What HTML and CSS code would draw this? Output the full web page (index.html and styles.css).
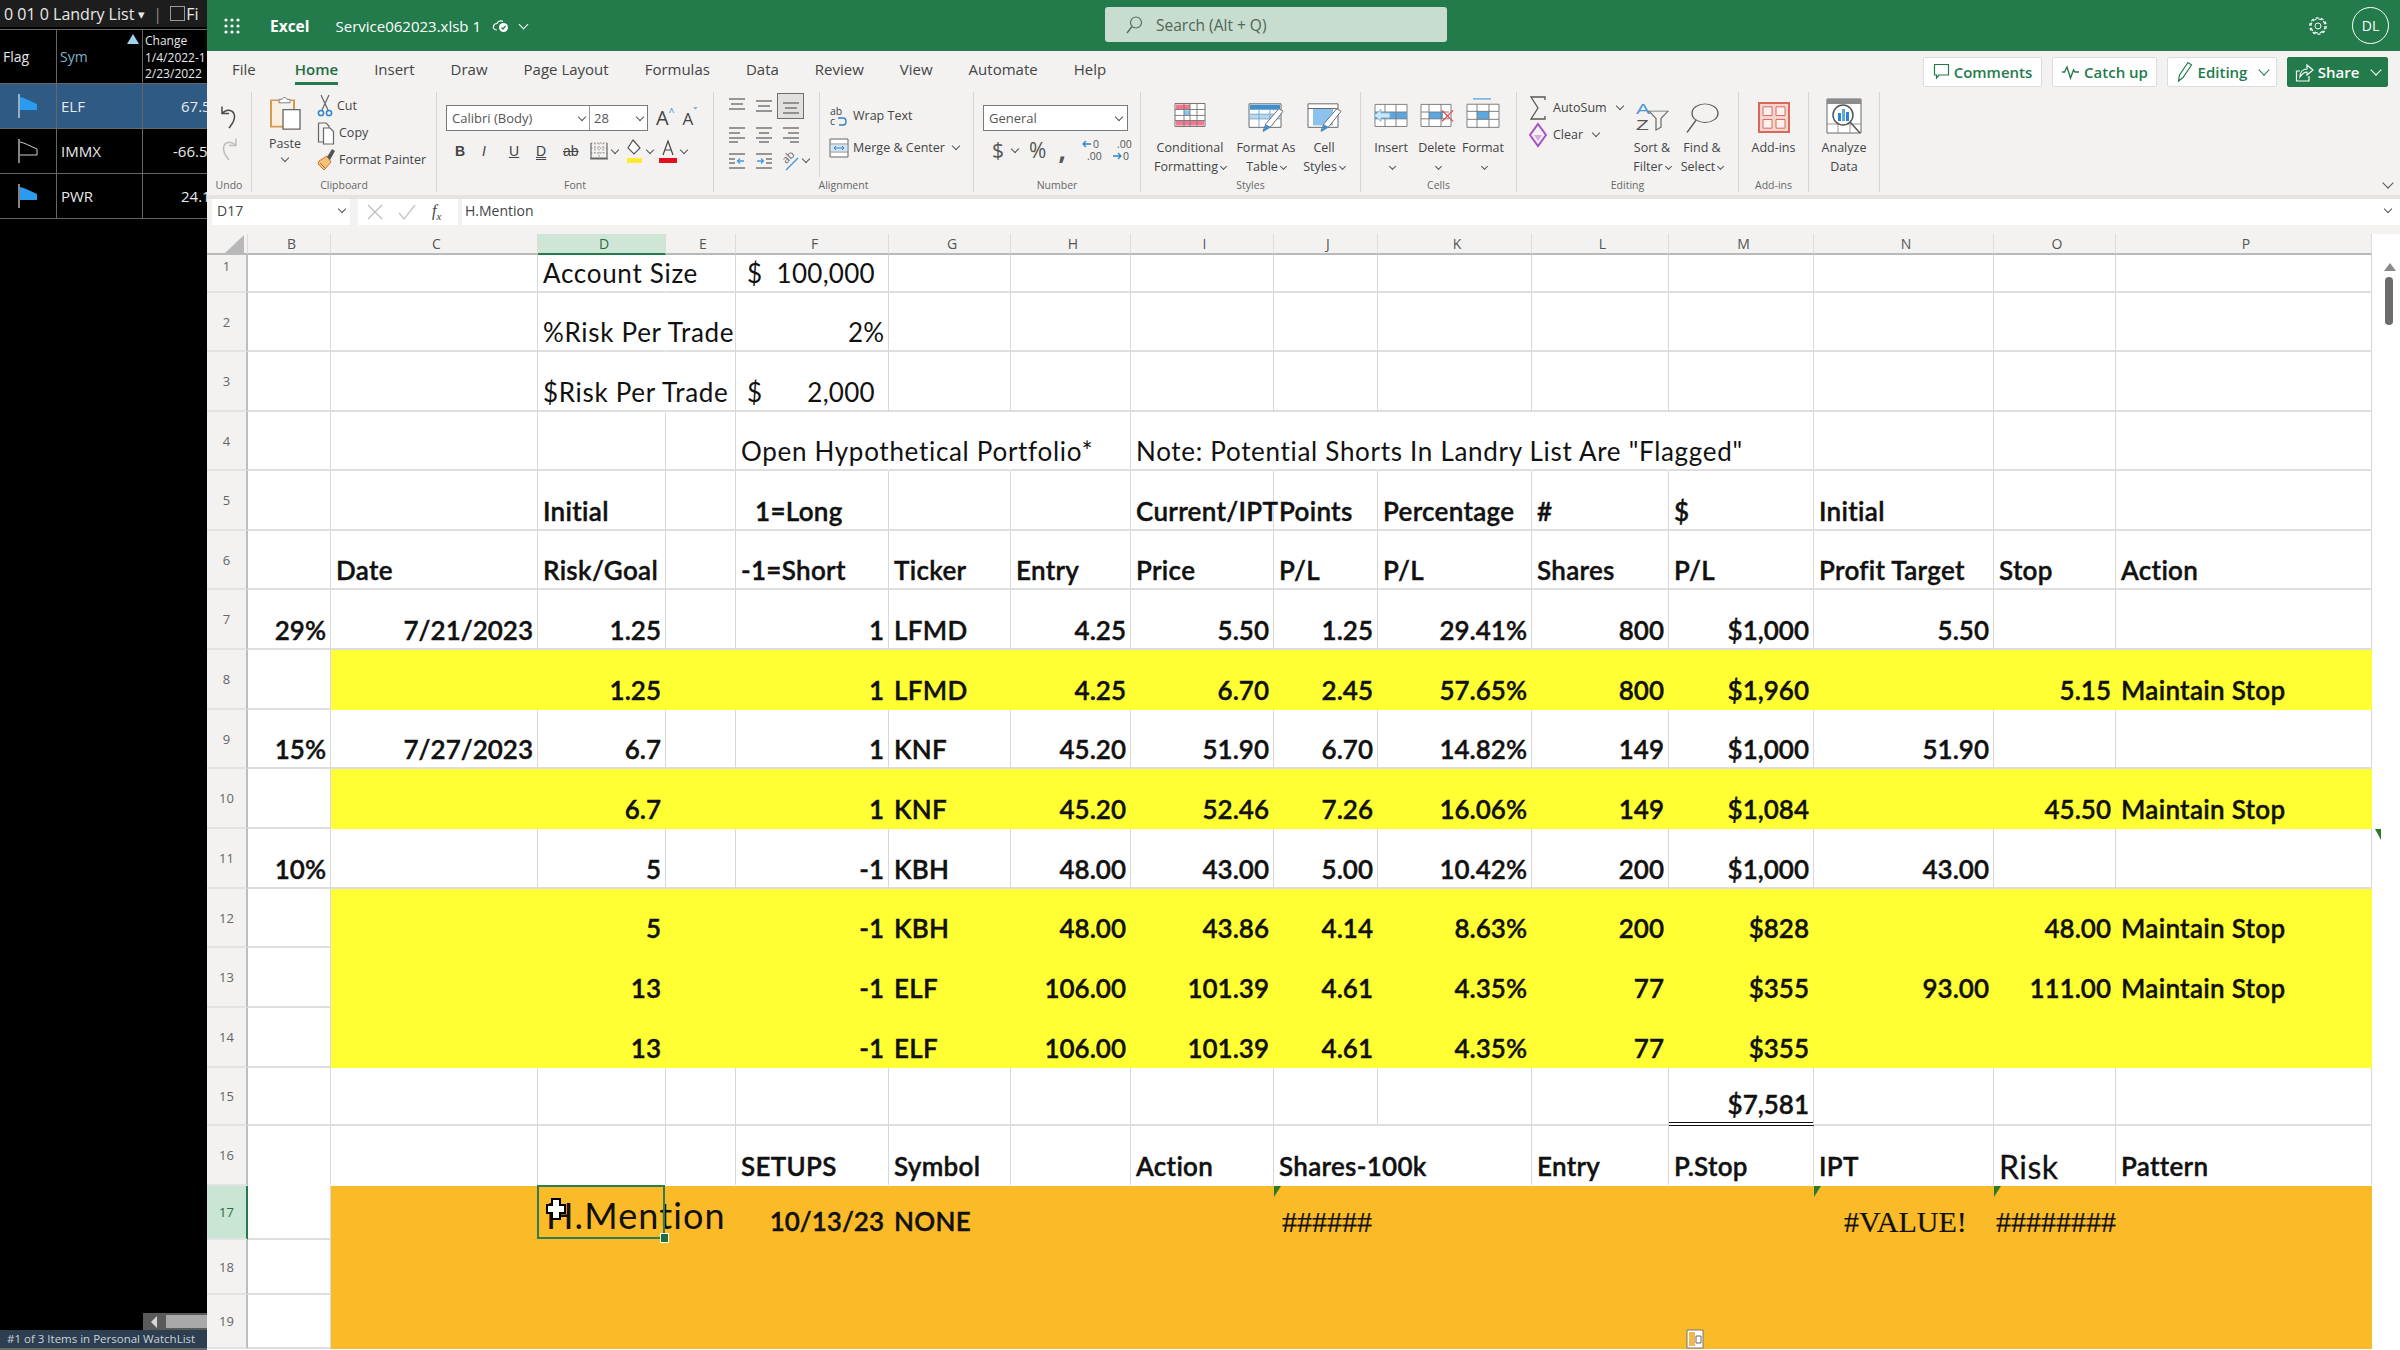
FILE: index.html
```html
<!DOCTYPE html>
<html lang="en">

<head>
    <meta charset="utf-8">
    <title>Service062023.xlsb - Excel</title>
    <link rel="stylesheet" href="styles.css">
</head>

<body>
    <!-- watch list panel on the left -->
    <aside class="watch">
        <div class="watch-top">0 01 0 Landry List <span class="caret">▾</span> <span class="pipe">|</span> <span class="check"></span>Fi</div>
        <div class="watch-row watch-head">
            <div class="wc-flag">Flag</div>
            <div class="wc-sym">Sym<span class="sort"></span></div>
            <div class="wc-chg">Change<br>1/4/2022-1<br>2/23/2022</div>
        </div>
        <div class="watch-row picked">
            <div class="wc-flag"><svg width="26" height="26" viewBox="0 0 26 26"><path d="M7 1V25" stroke="#dfe8ef" stroke-width="1.2"/><path d="M8 4C13 5 18 8 25 11V17H8Z" fill="#2b9bf0"/></svg></div>
            <div class="wc-sym">ELF</div>
            <div class="wc-num">67.5</div>
        </div>
        <div class="watch-row">
            <div class="wc-flag"><svg width="26" height="26" viewBox="0 0 26 26"><path d="M7 1V25" stroke="#dcdcdc" stroke-width="1.2"/><path d="M8 4C13 5 18 8 25 11V17H8" fill="none" stroke="#cfcfcf"/></svg></div>
            <div class="wc-sym">IMMX</div>
            <div class="wc-num">-66.5</div>
        </div>
        <div class="watch-row">
            <div class="wc-flag"><svg width="26" height="26" viewBox="0 0 26 26"><path d="M7 1V25" stroke="#dcdcdc" stroke-width="1.2"/><path d="M8 4C13 5 18 8 25 11V17H8Z" fill="#2b9bf0"/></svg></div>
            <div class="wc-sym">PWR</div>
            <div class="wc-num">24.1</div>
        </div>
        <div class="watch-scroll"><span class="scroll-left"></span><span class="scroll-thumb"></span></div>
        <div class="watch-status">#1 of 3 Items in Personal WatchList</div>
    </aside>

    <main class="excel">
        <header class="titlebar">
            <div class="title-left">
                <svg class="waffle" width="18" height="18" viewBox="0 0 18 18" fill="#fff"><circle cx="3" cy="3" r="1.6"/><circle cx="9" cy="3" r="1.6"/><circle cx="15" cy="3" r="1.6"/><circle cx="3" cy="9" r="1.6"/><circle cx="9" cy="9" r="1.6"/><circle cx="15" cy="9" r="1.6"/><circle cx="3" cy="15" r="1.6"/><circle cx="9" cy="15" r="1.6"/><circle cx="15" cy="15" r="1.6"/></svg>
                <span class="app">Excel</span>
                <span class="doc">Service062023.xlsb 1</span>
                <svg width="18" height="16" viewBox="0 0 18 16"><path d="M5 12C2 12 1 10 1.500 8C2 6 4 5.500 5 5.500C6 3 9 2 11 3.500" fill="none" stroke="#fff" stroke-width="1.200"/><circle cx="11.500" cy="9.500" r="4.500" fill="#fff"/><path d="M9.500 9.500L11 11L13.500 8" fill="none" stroke="#237b4b" stroke-width="1.200"/></svg>
                <span class="chev white"></span>
            </div>
            <div class="search">
                <svg width="18" height="20" viewBox="0 0 18 20"><circle cx="11" cy="7.500" r="5.500" fill="none" stroke="#54705f" stroke-width="1.200"/><path d="M7 11.500L2 18" stroke="#54705f" stroke-width="1.400"/></svg>
                <span>Search (Alt + Q)</span>
            </div>
            <div class="title-right">
                <svg width="20" height="20" viewBox="0 0 20 20"><circle cx="10" cy="10" r="3" fill="none" stroke="#fff"/><circle cx="10" cy="10" r="7" fill="none" stroke="#fff" stroke-width="1.100" stroke-dasharray="3.500 2"/><circle cx="10" cy="10" r="8.200" fill="none" stroke="#fff" stroke-width="1.300" stroke-dasharray="3 2.150"/></svg>
                <span class="avatar">DL</span>
            </div>
        </header>

        <nav class="tabs">
            <span class="tab file">File</span>
            <span class="tab active">Home</span>
            <span class="tab">Insert</span>
            <span class="tab">Draw</span>
            <span class="tab">Page Layout</span>
            <span class="tab">Formulas</span>
            <span class="tab">Data</span>
            <span class="tab">Review</span>
            <span class="tab">View</span>
            <span class="tab">Automate</span>
            <span class="tab">Help</span>
            <div class="actions">
                <button class="act w-comments"><svg width="17" height="20" viewBox="0 0 17 20"><path d="M1.500 2.500H15.500V13H6L3.500 16V13H1.500Z" fill="none" stroke="#237b4b" stroke-width="1.200"/></svg>Comments</button>
                <button class="act w-catch"><svg width="19" height="20" viewBox="0 0 19 20"><path d="M1 10H3.500L6 5L9.500 16L12.500 8L14 10H18" fill="none" stroke="#237b4b" stroke-width="1.400"/></svg>Catch up</button>
                <button class="act w-edit"><svg width="18" height="24" viewBox="0 0 18 24"><path d="M2.500 21L3.500 15L12 2.500L15.500 5L7 17.500Z" fill="none" stroke="#237b4b" stroke-width="1.200"/></svg>Editing<span class="chev green"></span></button>
                <button class="act share"><svg width="19" height="24" viewBox="0 0 19 24"><path d="M5 11H1.500V21H14V16" fill="none" stroke="#fff" stroke-width="1.200"/><path d="M5 17C5 12 8 9 12 9V5L18 10L12 15V12C9 12 7 14 5 17Z" fill="none" stroke="#fff" stroke-width="1.200"/></svg>Share<span class="chev white"></span></button>
            </div>
        </nav>

        <section class="ribbon">
            <div class="group g-undo">
                <div class="group-body undo-body">
                    <svg width="20" height="26" viewBox="0 0 20 26"><path d="M3 2.500V9.500H10M3 9.500C8 4 15 6 15.500 12C16 17 13 20 10 24" fill="none" stroke="#4a4a4a" stroke-width="1.500"/></svg>
                    <svg width="20" height="26" viewBox="0 0 20 26"><path d="M17 2.500V9.500H10M17 9.500C12 4 5 6 4.500 12C4 17 7 20 10 24" fill="none" stroke="#bdbdbd" stroke-width="1.500"/></svg>
                </div>
                <div class="group-label">Undo</div>
            </div>

            <div class="group g-clip">
                <div class="group-body clip-body">
                    <div class="paste">
                        <svg width="34" height="34" viewBox="0 0 34 40" preserveAspectRatio="none"><path d="M13 5H3V36H15" fill="#f8efe2" stroke="#d69b4d" stroke-width="2"/><path d="M11 8V4H14C14 1 19 1 19 4H22V8Z" fill="#fff" stroke="#777"/><path d="M22 5H26V16" fill="none" stroke="#d69b4d" stroke-width="2"/><path d="M15 16H32V39H15Z" fill="#fff" stroke="#666" stroke-width="1.300"/></svg>
                        <span>Paste</span>
                        <span class="chev"></span>
                    </div>
                    <div class="clip-list">
                        <div class="mini"><svg width="16" height="26" viewBox="0 0 16 26"><path d="M4 2L11 17M12 2L5 17" stroke="#666" stroke-width="1.200"/><circle cx="4" cy="20" r="2.600" fill="none" stroke="#2f83c8" stroke-width="1.500"/><circle cx="12" cy="20" r="2.600" fill="none" stroke="#2f83c8" stroke-width="1.500"/></svg>Cut</div>
                        <div class="mini"><svg width="18" height="26" viewBox="0 0 18 26"><path d="M1.500 3H9L12 6V8M1.500 3V22H6" fill="none" stroke="#666" stroke-width="1.200"/><path d="M6.500 8H13L16.500 11.500V24H6.500Z" fill="#fff" stroke="#666" stroke-width="1.200"/></svg>Copy</div>
                        <div class="mini"><svg width="18" height="26" viewBox="0 0 18 26"><path d="M2 14L10 9L14 15L7 23L1 17Z" fill="#f6c27a" stroke="#c9772b"/><path d="M10 10L15 2L18 4L13 13Z" fill="#555"/><path d="M3 16L8 21" stroke="#e0563a"/></svg>Format Painter</div>
                    </div>
                </div>
                <div class="group-label">Clipboard</div>
            </div>

            <div class="group g-font">
                <div class="group-body font-body">
                    <div class="font-top">
                        <div class="combo font-combo">
                            <span class="combo-name">Calibri (Body)<span class="chev"></span></span>
                            <span class="combo-size">28<span class="chev"></span></span>
                        </div>
                        <span class="grow">A<sup>^</sup></span>
                        <span class="shrink">A<sup>ˇ</sup></span>
                    </div>
                    <div class="font-tools">
                        <b class="fb">B</b><i class="fi">I</i><u class="fu">U</u><span class="fd">D</span><s class="fs">ab</s>
                        <svg class="fborder" width="18" height="20" viewBox="0 0 18 20"><path d="M1 2H17M1 7H17M1 12H17M5 2V12M9 2V17M13 2V12" stroke="#8c8c8c" stroke-dasharray="1.500 1.500" fill="none"/><path d="M1 2V17H17V2M0 18H18" stroke="#666" stroke-width="1.200" fill="none"/></svg>
                        <span class="chev"></span>
                        <svg class="ffill" width="18" height="26" viewBox="0 0 18 26"><path d="M8 2L15 10L9 16L3 10Z" fill="#fff" stroke="#555" stroke-width="1.200"/><path d="M2 20H17V25H2Z" fill="#ffe933"/></svg>
                        <span class="chev"></span>
                        <svg class="fcolor" width="18" height="26" viewBox="0 0 18 26"><path d="M4 17L9 3L14 17M6 12H12" fill="none" stroke="#444" stroke-width="1.200"/><path d="M0 20H18V25H0Z" fill="#e2101f"/></svg>
                        <span class="chev"></span>
                    </div>
                </div>
                <div class="group-label">Font</div>
            </div>

            <div class="group g-align">
                <div class="group-body align-body">
                    <div class="align-grid">
                        <svg width="20" height="20" viewBox="0 0 20 20"><path d="M2 3H18M4 8H16M2 13H18" stroke="#777" stroke-width="1.400"/></svg>
                        <svg width="20" height="20" viewBox="0 0 20 20"><path d="M2 5H18M4 10H16M2 15H18" stroke="#777" stroke-width="1.400"/></svg>
                        <span class="align-on"><svg width="20" height="20" viewBox="0 0 20 20"><path d="M2 7H18M4 12H16M2 17H18" stroke="#777" stroke-width="1.400"/></svg></span>
                        <svg width="20" height="20" viewBox="0 0 20 20"><path d="M2 4H18M2 9H13M2 14H18M2 18H11" stroke="#777" stroke-width="1.300"/></svg>
                        <svg width="20" height="20" viewBox="0 0 20 20"><path d="M2 4H18M5 9H15M2 14H18M5 18H15" stroke="#777" stroke-width="1.300"/></svg>
                        <svg width="20" height="20" viewBox="0 0 20 20"><path d="M2 4H18M7 9H18M2 14H18M9 18H18" stroke="#777" stroke-width="1.300"/></svg>
                        <svg width="20" height="20" viewBox="0 0 20 20"><path d="M2 3H18M2 8H8M2 12H8M2 17H18" stroke="#777" stroke-width="1.300"/><path d="M17 10H11M13 7.500L10.500 10L13 12.500" fill="none" stroke="#4b9ad6" stroke-width="1.300"/></svg>
                        <svg width="20" height="20" viewBox="0 0 20 20"><path d="M2 3H18M12 8H18M12 12H18M2 17H18" stroke="#777" stroke-width="1.300"/><path d="M3 10H9M7 7.500L9.500 10L7 12.500" fill="none" stroke="#4b9ad6" stroke-width="1.300"/></svg>
                        <span class="orient"><svg width="20" height="22" viewBox="0 0 20 22"><text x="3" y="11" class="svg-ab" transform="rotate(-45 8 10)">ab</text><path d="M5 20L17 8" stroke="#4b9ad6" stroke-width="1.500"/></svg><span class="chev"></span></span>
                    </div>
                    <div class="wrap-list">
                        <div class="mini"><svg width="20" height="24" viewBox="0 0 20 24"><text x="1" y="11" class="svg-ab dark">ab</text><text x="1" y="21" class="svg-ab dark">c</text><path d="M10 21H14C18 21 18 14 14 14H9" fill="none" stroke="#2f83c8" stroke-width="1.400"/></svg>Wrap Text</div>
                        <div class="mini"><svg width="20" height="22" viewBox="0 0 20 22"><path d="M1 2H19V20H1Z" fill="#fff" stroke="#666"/><path d="M1 7H19M1 15H19" stroke="#888"/><path d="M2 8H18V14H2Z" fill="#cfe5f6"/><path d="M5 11H15M7 9L5 11L7 13M13 9L15 11L13 13" fill="none" stroke="#2f83c8"/></svg>Merge &amp; Center<span class="chev"></span></div>
                    </div>
                </div>
                <div class="group-label">Alignment</div>
            </div>

            <div class="group g-number">
                <div class="group-body num-body">
                    <div class="combo num-combo">General<span class="chev"></span></div>
                    <div class="num-tools">
                        <span class="nt-dollar">$</span><span class="chev"></span>
                        <span class="nt-pct">%</span>
                        <span class="nt-comma">,</span>
                        <svg width="22" height="24" viewBox="0 0 22 24"><text x="12" y="10" class="svg-num">0</text><text x="6" y="22" class="svg-num">.00</text><path d="M10 6H2M5 3L2 6L5 9" fill="none" stroke="#2f83c8" stroke-width="1.300"/></svg>
                        <svg width="22" height="24" viewBox="0 0 22 24"><text x="6" y="10" class="svg-num">.00</text><text x="12" y="22" class="svg-num">0</text><path d="M2 18H10M7 15L10 18L7 21" fill="none" stroke="#2f83c8" stroke-width="1.300"/></svg>
                    </div>
                </div>
                <div class="group-label">Number</div>
            </div>

            <div class="group g-styles">
                <div class="group-body big-body styles-body">
                    <div class="big">
                        <svg width="34" height="28" viewBox="0 0 34 33" preserveAspectRatio="none"><path d="M2 3H32V30H2Z" fill="#fff" stroke="#666"/><path d="M3 4H17V10H3ZM3 23H31V29H3Z" fill="#f4778f"/><path d="M3 11H11V17H3Z" fill="#fff"/><path d="M11 11H17V17H11Z" fill="#8bc3ee"/><path d="M2 10H32M2 17H32M2 23H32M11 3V30M17 3V30M24 3V30" stroke="#777" fill="none"/></svg>
                        <span>Conditional<br>Formatting<span class="chev"></span></span>
                    </div>
                    <div class="big">
                        <svg width="36" height="32" viewBox="0 0 36 34" preserveAspectRatio="none"><path d="M1 3H33V28H1Z" fill="#fff" stroke="#666"/><path d="M2 4H32V9H2Z" fill="#3f8fd0"/><path d="M2 14H32V19H2Z" fill="#b6d7f2"/><path d="M1 9H33M1 14H33M1 19H33M11 9V28M22 9V28" stroke="#7aa7cb" fill="none"/><path d="M15 32L18 24L31 8L35 11L23 27Z" fill="#fff" stroke="#666"/><path d="M15 33L18 25L23 28Z" fill="#3f8fd0"/></svg>
                        <span>Format As<br>Table<span class="chev"></span></span>
                    </div>
                    <div class="big">
                        <svg width="36" height="32" viewBox="0 0 36 34" preserveAspectRatio="none"><path d="M2 3H32V28H2Z" fill="#fff" stroke="#666"/><path d="M7 8H27V26H7Z" fill="#8bc3ee"/><path d="M2 8H32" stroke="#666"/><path d="M15 32L18 24L31 8L35 11L23 27Z" fill="#fff" stroke="#666"/><path d="M15 33L18 25L23 28Z" fill="#3f8fd0"/></svg>
                        <span>Cell<br>Styles<span class="chev"></span></span>
                    </div>
                </div>
                <div class="group-label">Styles</div>
            </div>

            <div class="group g-cells">
                <div class="group-body big-body cells-body">
                    <div class="big">
                        <svg width="36" height="28" viewBox="0 0 36 33" preserveAspectRatio="none"><path d="M2 4H34V30H2Z" fill="#fff" stroke="#777"/><path d="M2 13H34V21H2Z" fill="#5aa7e2"/><path d="M2 13H34M2 21H34M12 4V30M23 4V30" stroke="#777" fill="none"/><path d="M1 17L8 10V14H17V20H8V24Z" fill="#cfe5f6" stroke="#6fb0e2"/></svg>
                        <span>Insert</span><span class="chev"></span>
                    </div>
                    <div class="big">
                        <svg width="36" height="28" viewBox="0 0 36 33" preserveAspectRatio="none"><path d="M2 4H32V30H2Z" fill="#fff" stroke="#777"/><path d="M10 13H24V21H10Z" fill="#5aa7e2"/><path d="M2 13H30M2 21H30M10 4V30M22 4V30" stroke="#777" fill="none"/><path d="M23 11L34 24M34 11L23 24" stroke="#e44e4e" stroke-width="1.500"/></svg>
                        <span>Delete</span><span class="chev"></span>
                    </div>
                    <div class="big">
                        <svg class="up" width="36" height="32" viewBox="0 0 36 36" preserveAspectRatio="none"><path d="M8 1H26" stroke="#5aa7e2" stroke-width="1.500"/><path d="M2 7H34V33H2Z" fill="#fff" stroke="#777"/><path d="M12 15H24V24H12Z" fill="#5aa7e2"/><path d="M2 15H34M2 24H34M12 7V33M24 7V33" stroke="#777" fill="none"/></svg>
                        <span>Format</span><span class="chev"></span>
                    </div>
                </div>
                <div class="group-label">Cells</div>
            </div>

            <div class="group g-edit">
                <div class="group-body edit-body">
                    <div class="edit-list">
                        <div class="mini"><svg width="18" height="26" viewBox="0 0 18 26"><path d="M16 5V2H2L9 13L2 24H16V21" fill="none" stroke="#555" stroke-width="1.300"/></svg>AutoSum<span class="chev"></span></div>
                        <div class="mini"><svg width="18" height="26" viewBox="0 0 18 26"><path d="M9 2L17 13L9 24L1 13Z" fill="none" stroke="#a64fc4" stroke-width="2"/><path d="M5 13L9 19L13 13Z" fill="#d9a6ea"/></svg>Clear<span class="chev"></span></div>
                    </div>
                    <div class="big">
                        <svg width="36" height="32" viewBox="0 0 36 44" preserveAspectRatio="none"><text x="2" y="18" class="svg-az blue">A</text><text x="2" y="40" class="svg-az">Z</text><path d="M15 14H34L27 24V36L22 40V24Z" fill="none" stroke="#666" stroke-width="1.200"/></svg>
                        <span>Sort &amp;<br>Filter<span class="chev"></span></span>
                    </div>
                    <div class="big">
                        <svg width="36" height="33" viewBox="0 0 36 46" preserveAspectRatio="none"><circle cx="21" cy="17" r="13" fill="none" stroke="#555" stroke-width="1.300"/><path d="M12 27L3 44" stroke="#555" stroke-width="1.500"/></svg>
                        <span>Find &amp;<br>Select<span class="chev"></span></span>
                    </div>
                </div>
                <div class="group-label">Editing</div>
            </div>

            <div class="group g-addins">
                <div class="group-body big-body">
                    <div class="big">
                        <svg width="34" height="33" viewBox="0 0 34 34" preserveAspectRatio="none"><path d="M2 2H32V32H2Z" fill="#f6d6cf" stroke="#d8695a" stroke-width="2"/><path d="M6 6H15V15H6ZM19 6H28V15H19ZM6 19H15V28H6ZM19 19H28V28H19Z" fill="#fbf1ee" stroke="#d8695a"/></svg>
                        <span>Add-ins</span>
                    </div>
                </div>
                <div class="group-label">Add-ins</div>
            </div>

            <div class="group g-analyze">
                <div class="group-body big-body analyze-body">
                    <div class="big">
                        <svg width="36" height="36" viewBox="0 0 36 36"><path d="M1 1H35V35H1Z" fill="#fff" stroke="#666"/><path d="M1 1H35V6H1Z" fill="#8c8c8c"/><path d="M1 26H35M12 26V35M24 26V35" stroke="#999"/><circle cx="17" cy="17" r="10" fill="#fff" stroke="#555" stroke-width="1.500"/><path d="M12 15H15V23H12Z" fill="#2f83c8"/><path d="M16 11H19V23H16Z" fill="#5aa7e2"/><path d="M20 14H23V23H20Z" fill="#2f83c8"/><path d="M24 24L34 35" stroke="#555" stroke-width="1.500"/></svg>
                        <span>Analyze<br>Data</span>
                    </div>
                </div>
                <div class="group-label"></div>
            </div>
            <span class="chev collapse"></span>
        </section>

        <section class="formula">
            <div class="namebox">D17<span class="chev"></span></div>
            <div class="fx-tools">
                <svg width="18" height="18" viewBox="0 0 18 18"><path d="M2 2L16 16M16 2L2 16" stroke="#bdbdbd" stroke-width="1.300"/></svg>
                <svg width="18" height="18" viewBox="0 0 18 18"><path d="M1 10L6 16L17 2" fill="none" stroke="#c4c4c4" stroke-width="1.300"/></svg>
                <span class="fx">f<sub>x</sub></span>
            </div>
            <div class="fx-input">H.Mention<span class="chev"></span></div>
        </section>

        <section class="sheet">
            <table>
                <thead>
                    <tr>
                        <th class="corner"><span class="corner-mark"></span></th>
                        <th>B</th><th>C</th><th class="cur">D</th><th>E</th><th>F</th><th>G</th><th>H</th><th>I</th><th>J</th><th>K</th><th>L</th><th>M</th><th>N</th><th>O</th><th>P</th>
                    </tr>
                </thead>
                <tbody>
                    <tr class="r1 light">
                        <th class="first-num">1</th><td></td><td></td><td class="open">Account Size</td><td></td><td class="acct-cell"><div class="acct"><span>$</span><span>100,000</span></div></td><td></td><td></td><td></td><td></td><td></td><td></td><td></td><td></td><td></td><td></td>
                    </tr>
                    <tr class="s light">
                        <th>2</th><td></td><td></td><td class="open">%Risk Per Trade</td><td></td><td class="n">2%</td><td></td><td></td><td></td><td></td><td></td><td></td><td></td><td></td><td></td><td></td>
                    </tr>
                    <tr class="light">
                        <th>3</th><td></td><td></td><td class="open">$Risk Per Trade</td><td></td><td class="acct-cell"><div class="acct"><span>$</span><span>2,000</span></div></td><td></td><td></td><td></td><td></td><td></td><td></td><td></td><td></td><td></td><td></td>
                    </tr>
                    <tr class="s light">
                        <th>4</th><td></td><td></td><td></td><td></td><td class="open">Open Hypothetical Portfolio*</td><td class="open"></td><td></td><td class="open">Note: Potential Shorts In Landry List Are "Flagged"</td><td class="open"></td><td class="open"></td><td class="open"></td><td></td><td></td><td></td><td></td>
                    </tr>
                    <tr>
                        <th>5</th><td></td><td></td><td>Initial</td><td></td><td class="indent">1=Long</td><td></td><td></td><td>Current/IPT</td><td>Points</td><td>Percentage</td><td>#</td><td>$</td><td>Initial</td><td></td><td></td>
                    </tr>
                    <tr class="s">
                        <th>6</th><td></td><td>Date</td><td>Risk/Goal</td><td></td><td>-1=Short</td><td>Ticker</td><td>Entry</td><td>Price</td><td>P/L</td><td>P/L</td><td>Shares</td><td>P/L</td><td>Profit Target</td><td>Stop</td><td>Action</td>
                    </tr>
                    <tr>
                        <th>7</th><td class="n">29%</td><td class="n">7/21/2023</td><td class="n">1.25</td><td></td><td class="n">1</td><td>LFMD</td><td class="n">4.25</td><td class="n">5.50</td><td class="n">1.25</td><td class="n">29.41%</td><td class="n">800</td><td class="n">$1,000</td><td class="n">5.50</td><td></td><td></td>
                    </tr>
                    <tr class="yellow">
                        <th>8</th><td></td><td></td><td class="n">1.25</td><td></td><td class="n">1</td><td>LFMD</td><td class="n">4.25</td><td class="n">6.70</td><td class="n">2.45</td><td class="n">57.65%</td><td class="n">800</td><td class="n">$1,960</td><td></td><td class="n">5.15</td><td>Maintain Stop</td>
                    </tr>
                    <tr class="s">
                        <th>9</th><td class="n">15%</td><td class="n">7/27/2023</td><td class="n">6.7</td><td></td><td class="n">1</td><td>KNF</td><td class="n">45.20</td><td class="n">51.90</td><td class="n">6.70</td><td class="n">14.82%</td><td class="n">149</td><td class="n">$1,000</td><td class="n">51.90</td><td></td><td></td>
                    </tr>
                    <tr class="yellow">
                        <th>10</th><td></td><td></td><td class="n">6.7</td><td></td><td class="n">1</td><td>KNF</td><td class="n">45.20</td><td class="n">52.46</td><td class="n">7.26</td><td class="n">16.06%</td><td class="n">149</td><td class="n">$1,084</td><td></td><td class="n">45.50</td><td class="tick-side">Maintain Stop</td>
                    </tr>
                    <tr>
                        <th>11</th><td class="n">10%</td><td></td><td class="n">5</td><td></td><td class="n">-1</td><td>KBH</td><td class="n">48.00</td><td class="n">43.00</td><td class="n">5.00</td><td class="n">10.42%</td><td class="n">200</td><td class="n">$1,000</td><td class="n">43.00</td><td></td><td></td>
                    </tr>
                    <tr class="s yellow">
                        <th>12</th><td></td><td></td><td class="n">5</td><td></td><td class="n">-1</td><td>KBH</td><td class="n">48.00</td><td class="n">43.86</td><td class="n">4.14</td><td class="n">8.63%</td><td class="n">200</td><td class="n">$828</td><td></td><td class="n">48.00</td><td>Maintain Stop</td>
                    </tr>
                    <tr class="yellow">
                        <th>13</th><td></td><td></td><td class="n">13</td><td></td><td class="n">-1</td><td>ELF</td><td class="n">106.00</td><td class="n">101.39</td><td class="n">4.61</td><td class="n">4.35%</td><td class="n">77</td><td class="n">$355</td><td class="n">93.00</td><td class="n">111.00</td><td>Maintain Stop</td>
                    </tr>
                    <tr class="yellow">
                        <th>14</th><td></td><td></td><td class="n">13</td><td></td><td class="n">-1</td><td>ELF</td><td class="n">106.00</td><td class="n">101.39</td><td class="n">4.61</td><td class="n">4.35%</td><td class="n">77</td><td class="n subtotal">$355</td><td></td><td></td><td></td>
                    </tr>
                    <tr class="r15">
                        <th>15</th><td></td><td></td><td></td><td></td><td></td><td></td><td></td><td></td><td></td><td></td><td></td><td class="n total">$7,581</td><td></td><td></td><td></td>
                    </tr>
                    <tr class="r16">
                        <th>16</th><td></td><td></td><td></td><td></td><td>SETUPS</td><td>Symbol</td><td></td><td>Action</td><td class="open">Shares-100k</td><td></td><td>Entry</td><td>P.Stop</td><td>IPT</td><td class="risk">Risk</td><td>Pattern</td>
                    </tr>
                    <tr class="orange r17">
                        <th class="cur-row">17</th><td></td><td></td>
                        <td class="sel"><span class="mention">H.Mention</span><span class="sel-box"></span><svg class="plus" width="22" height="24" viewBox="0 0 22 24"><path d="M7 2H15V8H20V16H15V22H7V16H2V8H7Z" fill="#fff" stroke="#000" stroke-width="2"/></svg></td>
                        <td></td><td class="n">10/13/23</td><td>NONE</td><td></td><td></td><td class="serif tri hash">######</td><td></td><td></td><td></td><td class="serif tri val">#VALUE!</td><td class="serif tri hash2">########</td><td></td>
                    </tr>
                    <tr class="orange r18">
                        <th>18</th><td></td><td></td><td></td><td></td><td></td><td></td><td></td><td></td><td></td><td></td><td></td><td></td><td></td><td></td><td></td>
                    </tr>
                    <tr class="orange r19">
                        <th>19</th><td></td><td></td><td></td><td></td><td></td><td></td><td></td><td></td><td></td><td></td><td></td><td></td><td></td><td></td><td></td>
                    </tr>
                </tbody>
            </table>
            <div class="vscroll"><span class="vs-up"></span><span class="vs-thumb"></span></div>
            <svg class="paste-opt" width="18" height="22" viewBox="0 0 18 22"><path d="M1 2H17V20H1Z" fill="#fff" stroke="#777"/><path d="M3 4H9V18H3Z" fill="#f2b84b"/><path d="M10 8H15V15H10Z" fill="#fff" stroke="#666"/></svg>
        </section>
    </main>
</body>

</html>
```

FILE: styles.css
```css
* {
    box-sizing: border-box;
}

html,
body {
    margin: 0;
    height: 1350px;
    overflow: hidden;
}

body {
    display: flex;
    font-family: "Open Sans", sans-serif;
    background-color: #000;
}

svg {
    display: block;
    flex: none;
}

/* small chevrons */
.chev {
    display: inline-block;
    width: 6px;
    height: 6px;
    margin: 0 0 3px 4px;
    border-right: 1.5px solid #555;
    border-bottom: 1.5px solid #555;
    transform: rotate(45deg);
    flex: none;
}

.chev.white {
    border-color: #fff;
    width: 8px;
    height: 8px;
}

.chev.green {
    border-color: #237b4b;
    width: 8px;
    height: 8px;
}

/* watch list */
.watch {
    width: 207px;
    flex: none;
    display: flex;
    flex-direction: column;
    background-color: #000;
    color: #e8e8e8;
    overflow: hidden;
}

.watch-top {
    height: 27px;
    margin-bottom: 2px;
    padding: 0 0 0 4px;
    display: flex;
    align-items: center;
    gap: 4px;
    background-color: #1d1d1d;
    font-size: 16px;
    white-space: nowrap;
}

.caret {
    font-size: 13px;
}

.pipe {
    color: #888;
    margin: 0 4px;
}

.check {
    width: 15px;
    height: 15px;
    border: 1px solid #999;
    margin-right: -3px;
}

.watch-row {
    display: grid;
    grid-template-columns: 57px 86px 64px;
    height: 45px;
    border-bottom: 1px solid #666;
    font-size: 15px;
    align-items: stretch;
}

.watch-row > div {
    display: flex;
    align-items: center;
    border-right: 1px solid #666;
    white-space: nowrap;
    overflow: hidden;
}

.watch-head {
    height: 55px;
    border-top: 1px solid #666;
    font-size: 14px;
}

.picked {
    background-color: #2f5a83;
}

.wc-flag {
    padding-left: 12px;
}

.watch-head .wc-flag {
    padding-left: 3px;
}

.wc-sym {
    padding-left: 4px;
    position: relative;
}

.watch-head .wc-sym {
    color: #7fb0cf;
    padding-left: 3px;
}

.sort {
    position: absolute;
    top: 4px;
    right: 3px;
    border-left: 6px solid transparent;
    border-right: 6px solid transparent;
    border-bottom: 10px solid #9ed3ea;
}

.watch-row > .wc-chg {
    display: block;
    font-size: 12px;
    line-height: 16.5px;
    padding: 3px 0 0 2px;
    border-right: 0;
}

.watch-row > .wc-num {
    justify-content: flex-start;
    padding-left: 38px;
    border-right: 0;
    font-size: 15px;
}

.watch-row:nth-child(4) .wc-num {
    padding-left: 30px;
}

.watch-scroll {
    margin-top: auto;
    margin-left: 143px;
    height: 17px;
    background-color: #5a5a5a;
    display: flex;
    align-items: center;
    gap: 9px;
    padding-left: 8px;
}

.scroll-left {
    border-top: 6px solid transparent;
    border-bottom: 6px solid transparent;
    border-right: 6px solid #d8d8d8;
}

.scroll-thumb {
    flex: 1;
    height: 13px;
    background-color: #a9a9a9;
}

.watch-status {
    height: 20px;
    padding-left: 7px;
    background-color: #2c3e4f;
    color: #c8d3dc;
    font-size: 11.5px;
    line-height: 18px;
    white-space: nowrap;
    border-bottom: 2px solid #6a6a6a;
}

/* excel window */
.excel {
    flex: 1;
    min-width: 0;
    background-color: #f3f2f1;
    color: #444;
    position: relative;
}

.titlebar {
    height: 51px;
    display: grid;
    grid-template-columns: 898px 342px 1fr;
    background-color: #237b4b;
    color: #fff;
    font-size: 15px;
}

.title-left {
    display: flex;
    align-items: center;
    padding-left: 16px;
}

.app {
    margin-left: 29px;
    font-weight: 700;
    font-size: 15.5px;
}

.doc {
    margin: 0 11px 0 26px;
}

.title-left .chev {
    width: 7px;
    height: 7px;
    margin-left: 10px;
}

.search {
    margin-top: 7px;
    height: 35px;
    padding-left: 20px;
    display: flex;
    align-items: center;
    gap: 13px;
    background-color: #c8dccf;
    border-radius: 3px;
    color: #4e6757;
    font-size: 15.5px;
}

.title-right {
    display: flex;
    align-items: center;
    justify-content: flex-end;
    gap: 24px;
    padding-right: 11px;
}

.avatar {
    width: 37px;
    height: 37px;
    border: 1px solid #fff;
    border-radius: 50%;
    display: flex;
    align-items: center;
    justify-content: center;
    font-size: 14px;
}

.tabs {
    height: 41px;
    padding: 0 0 5px 25px;
    display: flex;
    align-items: center;
    gap: 36px;
    font-size: 15px;
}

.tab {
    position: relative;
}

.file {
    margin-right: 3px;
}

.active {
    color: #1e6d41;
    font-weight: 600;
}

.active::after {
    content: "";
    position: absolute;
    left: 0;
    right: 0;
    bottom: -6px;
    height: 3px;
    background-color: #237b4b;
}

.actions {
    margin-left: auto;
    margin-right: 12px;
    margin-top: 6px;
    display: flex;
    gap: 10px;
}

.act {
    height: 30px;
    display: flex;
    align-items: center;
    justify-content: center;
    gap: 4px;
    padding: 0;
    background-color: #fff;
    border: 1px solid #dcdcdc;
    border-radius: 2px;
    color: #237b4b;
    font: 600 15px "Open Sans", sans-serif;
}

.act .chev {
    margin: 0 0 4px 9px;
}

.w-comments {
    width: 119px;
}

.w-catch {
    width: 105px;
}

.w-edit {
    width: 110px;
}

.share {
    width: 101px;
    background-color: #237b4b;
    border-color: #237b4b;
    color: #fff;
}

/* ribbon */
.ribbon {
    height: 107px;
    display: flex;
    position: relative;
    font-size: 12.5px;
    border-bottom: 4px solid #e4e3e2;
}

.group {
    height: 100px;
    flex: none;
    display: flex;
    flex-direction: column;
    border-right: 1px solid #d6d5d4;
}

.group-body {
    height: 86px;
    display: flex;
}

.group-label {
    height: 14px;
    line-height: 14px;
    text-align: center;
    font-size: 10.5px;
    color: #666;
}

.g-undo { width: 45px; }
.g-clip { width: 185px; }
.g-font { width: 277px; }
.g-align { width: 260px; }
.g-number { width: 167px; }
.g-styles { width: 220px; }
.g-cells { width: 156px; }
.g-edit { width: 222px; }
.g-addins { width: 70px; }
.g-analyze { width: 71px; }

.undo-body {
    flex-direction: column;
    align-items: center;
    padding: 12px 0 0 0;
    gap: 6px;
}

.clip-body {
    padding-left: 15px;
}

.paste {
    display: flex;
    flex-direction: column;
    align-items: center;
    width: 36px;
    padding-top: 4px;
    font-size: 12.5px;
}

.paste span:not(.chev) {
    margin-top: 5px;
}

.paste .chev {
    margin: 3px 0 0;
}

.clip-list {
    margin-left: 14px;
    display: flex;
    flex-direction: column;
}

.mini {
    display: flex;
    align-items: center;
    gap: 4px;
    height: 27px;
    white-space: nowrap;
}

.font-body {
    flex-direction: column;
    padding: 13px 0 0 9px;
}

.font-top {
    display: flex;
    align-items: center;
}

.combo {
    height: 26px;
    background-color: #fff;
    border: 1px solid #7a7a7a;
    display: flex;
    align-items: center;
    font-size: 13px;
    color: #555;
}

.font-combo {
    width: 202px;
}

.combo-name {
    width: 143px;
    display: flex;
    align-items: center;
    justify-content: space-between;
    padding: 0 4px 0 5px;
    border-right: 1px solid #9a9a9a;
    height: 100%;
}

.combo-size {
    flex: 1;
    display: flex;
    align-items: center;
    justify-content: space-between;
    padding: 0 4px;
}

.grow,
.shrink {
    font-size: 20px;
    line-height: 1;
    margin-left: 8px;
}

.shrink {
    font-size: 17px;
    margin-left: 8px;
}

.grow sup,
.shrink sup {
    font-size: 10px;
    color: #2f83c8;
    vertical-align: 9px;
    line-height: 0;
}

.font-tools {
    margin-top: 6px;
    padding-left: 9px;
    display: flex;
    align-items: center;
    font-size: 14px;
    height: 28px;
}

.font-tools .chev {
    margin: 0 0 3px 4px;
}

.fb,
.fi,
.fu,
.fd,
.fs {
    width: 27px;
    font-family: "Liberation Sans", sans-serif;
}

.fd {
    text-decoration: underline double;
}

.fs {
    width: 25px;
    margin-right: 2px;
}

.ffill {
    margin-left: 7px;
}

.fcolor {
    margin-left: 6px;
}

.align-body {
    padding: 0 0 0 9px;
}

.align-grid {
    width: 97px;
    display: grid;
    grid-template-columns: repeat(3, 27px);
    grid-template-rows: 28px 27px 27px;
    align-items: center;
    justify-items: center;
    border-right: 1px solid #d6d5d4;
    height: 85px;
}

.align-on {
    width: 27px;
    height: 26px;
    padding: 2px 3px;
    background-color: #e1e0df;
    border: 1px solid #6e6e6e;
}

.orient {
    display: flex;
    align-items: center;
    margin-left: 8px;
}

.orient svg {
    overflow: visible;
}

.orient .chev {
    margin: 0 0 3px 2px;
}

.svg-ab {
    font: 11px "Open Sans", sans-serif;
    fill: #666;
}

.svg-ab.dark {
    fill: #444;
    font-size: 10.5px;
}

.svg-num {
    font: 10.5px "Open Sans", sans-serif;
    fill: #555;
}

.svg-az {
    font: 21px "Liberation Sans", sans-serif;
    fill: #555;
}

.svg-az.blue {
    fill: #4b9ad6;
}

.wrap-list {
    margin-left: 9px;
    padding-top: 10px;
    display: flex;
    flex-direction: column;
    gap: 5px;
}

.num-body {
    flex-direction: column;
    padding: 13px 0 0 9px;
}

.num-combo {
    width: 145px;
    justify-content: space-between;
    padding: 0 5px;
}

.num-tools {
    display: flex;
    align-items: center;
    margin-top: 4px;
    padding-left: 9px;
    height: 30px;
    color: #555;
}

.num-tools .chev {
    margin-left: 8px;
}

.nt-dollar {
    font-size: 21px;
}

.nt-pct {
    font-size: 21px;
    margin: 0 12px 0 11px;
}

.nt-comma {
    font-size: 26px;
    font-weight: 700;
    line-height: 18px;
    margin-right: 15px;
}

.num-tools svg + svg {
    margin-left: 8px;
}

.big-body {
    justify-content: center;
    padding-top: 9px;
}

/* icon row is the same height everywhere so the labels line up */
.big {
    display: grid;
    grid-template-rows: 37px auto auto;
    justify-items: center;
    width: 46px;
    text-align: center;
    line-height: 19px;
    white-space: nowrap;
}

.big .chev {
    margin: 0 0 2px 3px;
    width: 5px;
    height: 5px;
}

.big svg.up {
    margin-top: -3px;
}

.styles-body {
    justify-content: flex-start;
    padding-left: 9px;
}

.styles-body .big {
    width: 58px;
}

.styles-body .big:nth-child(1) {
    width: 80px;
}

.styles-body .big:nth-child(2) {
    width: 72px;
}

.styles-body .big:nth-child(3) {
    width: 44px;
}

.cells-body {
    justify-content: flex-start;
    padding-left: 7px;
}

.analyze-body {
    padding-top: 6px;
}

.analyze-body .big {
    grid-template-rows: 40px auto;
}

.edit-body {
    padding: 9px 0 0 12px;
}

.edit-list {
    width: 98px;
    margin-top: -9px;
    padding-top: 2px;
    display: flex;
    flex-direction: column;
}

.edit-list .mini {
    gap: 6px;
}

.edit-body .big {
    width: 50px;
}

.collapse {
    position: absolute;
    right: 8px;
    bottom: 5px;
    width: 8px;
    height: 8px;
}

.formula {
    height: 26px;
    margin: 0 0 9px;
    padding: 0 0 0 5px;
    display: flex;
    gap: 8px;
    font-size: 14px;
    color: #444;
}

.namebox,
.fx-tools,
.fx-input {
    background-color: #fff;
    display: flex;
    align-items: center;
}

.namebox {
    width: 138px;
    padding: 0 5px 3px;
    justify-content: space-between;
}

.fx-tools {
    width: 100px;
    padding-left: 8px;
    gap: 14px;
}

.fx {
    font: italic 16px "Liberation Serif", serif;
    margin-left: 2px;
}

.fx sub {
    font-size: 11px;
}

.fx-input {
    flex: 1;
    margin-left: -4px;
    padding: 0 9px 3px 3px;
    justify-content: space-between;
}

/* the sheet */
.sheet {
    position: relative;
    height: 1117px;
    background-color: #fff;
    overflow: hidden;
}

table {
    table-layout: fixed;
    border-collapse: separate;
    border-spacing: 0;
    width: 2165px;
}

thead th {
    height: 21px;
    padding: 0 0 0 5px;
    background-color: #f3f2f1;
    border-bottom: 2px solid #b9b9b9;
    border-right: 1px solid #dcdcdc;
    font-size: 14px;
    font-weight: 400;
    color: #555;
}

thead th:nth-child(1) { width: 41px; }
thead th:nth-child(2) { width: 83px; }
thead th:nth-child(3) { width: 207px; }
thead th:nth-child(4) { width: 128px; }
thead th:nth-child(5) { width: 70px; }
thead th:nth-child(6) { width: 153px; }
thead th:nth-child(7) { width: 122px; }
thead th:nth-child(8) { width: 120px; }
thead th:nth-child(9) { width: 143px; }
thead th:nth-child(10) { width: 104px; }
thead th:nth-child(11) { width: 154px; }
thead th:nth-child(12) { width: 137px; }
thead th:nth-child(13) { width: 145px; }
thead th:nth-child(14) { width: 180px; }
thead th:nth-child(15) { width: 122px; }
thead th:nth-child(16) { width: 256px; }

thead th.cur {
    background-color: #cfe6d7;
    border-bottom-color: #237b4b;
    color: #2e6a48;
}

.corner {
    position: relative;
    background-color: #f3f2f1;
}

.corner-mark {
    position: absolute;
    right: 3px;
    bottom: 0;
    border-left: 19px solid transparent;
    border-bottom: 18px solid #b8b8b8;
}

tbody tr {
    height: 60px;
}

tbody tr.s {
    height: 59px;
}

tbody tr.r1 {
    height: 38px;
}

tbody tr.r15 {
    height: 58px;
}

tbody tr.r17,
tbody tr.r19 {
    height: 54px;
}

tbody tr.r18 {
    height: 55px;
}

tbody th {
    padding: 0;
    background-color: #f3f2f1;
    border-right: 2px solid #bdbdbd;
    border-bottom: 2px solid #e3e3e3;
    font-size: 13px;
    font-weight: 400;
    color: #666;
}

tbody th.first-num {
    vertical-align: top;
    padding-top: 2px;
}

tbody th.cur-row {
    background-color: #c9e5d3;
    border-right-color: #237b4b;
    color: #2e6a48;
}

td {
    padding: 0 4px 1px 5px;
    border-right: 1px solid #d8d8d8;
    border-bottom: 2px solid #dedede;
    vertical-align: bottom;
    white-space: nowrap;
    font-family: Lato, sans-serif;
    font-size: 26px;
    font-weight: 600;
    letter-spacing: 0.3px;
    line-height: 33px;
    color: #111;
    -webkit-text-stroke: 0.4px #111;
}

.light td {
    font-weight: 400;
    letter-spacing: 0.7px;
    -webkit-text-stroke: 0;
}

td.n {
    text-align: right;
    letter-spacing: 0;
}

td.open {
    border-right-color: transparent;
}

td.indent {
    padding-left: 19px;
}

td.acct-cell {
    padding-left: 11px;
    padding-right: 13px;
    letter-spacing: 0.3px;
}

.acct {
    display: flex;
    justify-content: space-between;
}

.yellow td:not(:nth-of-type(1)) {
    background-color: #ffff33;
    border-color: #ffff33;
}

.orange td:not(:nth-of-type(1)) {
    background-color: #fbba27;
    border-color: #fbba27;
}

.r16 td {
    border-bottom-color: #fff;
}

td.subtotal {
    border-bottom-color: #1a1a1a;
}

td.total {
    border-bottom: 4px double #111;
}

td.risk {
    font-size: 32px;
    font-weight: 400;
    letter-spacing: 0.5px;
    -webkit-text-stroke: 0.3px #111;
}

td.serif {
    font-family: "Liberation Serif", serif;
    font-size: 30px;
    font-weight: 400;
    letter-spacing: 0;
    -webkit-text-stroke: 0.2px #111;
}

.r17 td {
    padding-bottom: 0;
}

.sel {
    position: relative;
}

td .mention {
    font-size: 36px;
    font-weight: 400;
    letter-spacing: 1.1px;
    position: absolute;
    left: 8px;
    bottom: 1px;
    line-height: 44px;
    -webkit-text-stroke: 0;
}

.sel-box {
    position: absolute;
    inset: -1px 0 -1px -1px;
    border: 2px solid #2f7d54;
}

.sel-box::after {
    content: "";
    position: absolute;
    right: -6px;
    bottom: -6px;
    width: 7px;
    height: 8px;
    background-color: #1f6e43;
    border: 1px solid #fff;
}

.plus {
    position: absolute;
    left: 7px;
    top: 11px;
}

.tri {
    position: relative;
}

.tri::before {
    content: "";
    position: absolute;
    left: 0;
    top: 0;
    border-top: 11px solid #2b7a2b;
    border-right: 7px solid transparent;
}

.hash {
    padding-left: 8px;
}

td.val {
    padding-left: 30px;
}

td.hash2 {
    padding-left: 2px;
}

.tick-side {
    position: relative;
}

.tick-side::after {
    content: "";
    position: absolute;
    right: -10px;
    bottom: -13px;
    border-top: 11px solid #2b7a2b;
    border-left: 6px solid transparent;
}

.vscroll {
    position: absolute;
    top: 21px;
    right: 0;
    width: 18px;
}

.vs-up {
    display: block;
    margin: 8px 0 0 2px;
    width: 0;
    border-left: 6px solid transparent;
    border-right: 6px solid transparent;
    border-bottom: 8px solid #8a8a8a;
}

.vs-thumb {
    display: block;
    margin: 6px 0 0 3px;
    width: 8px;
    height: 48px;
    border-radius: 4px;
    background-color: #6c6c6c;
}

.paste-opt {
    position: absolute;
    left: 1479px;
    top: 1094px;
}
```
